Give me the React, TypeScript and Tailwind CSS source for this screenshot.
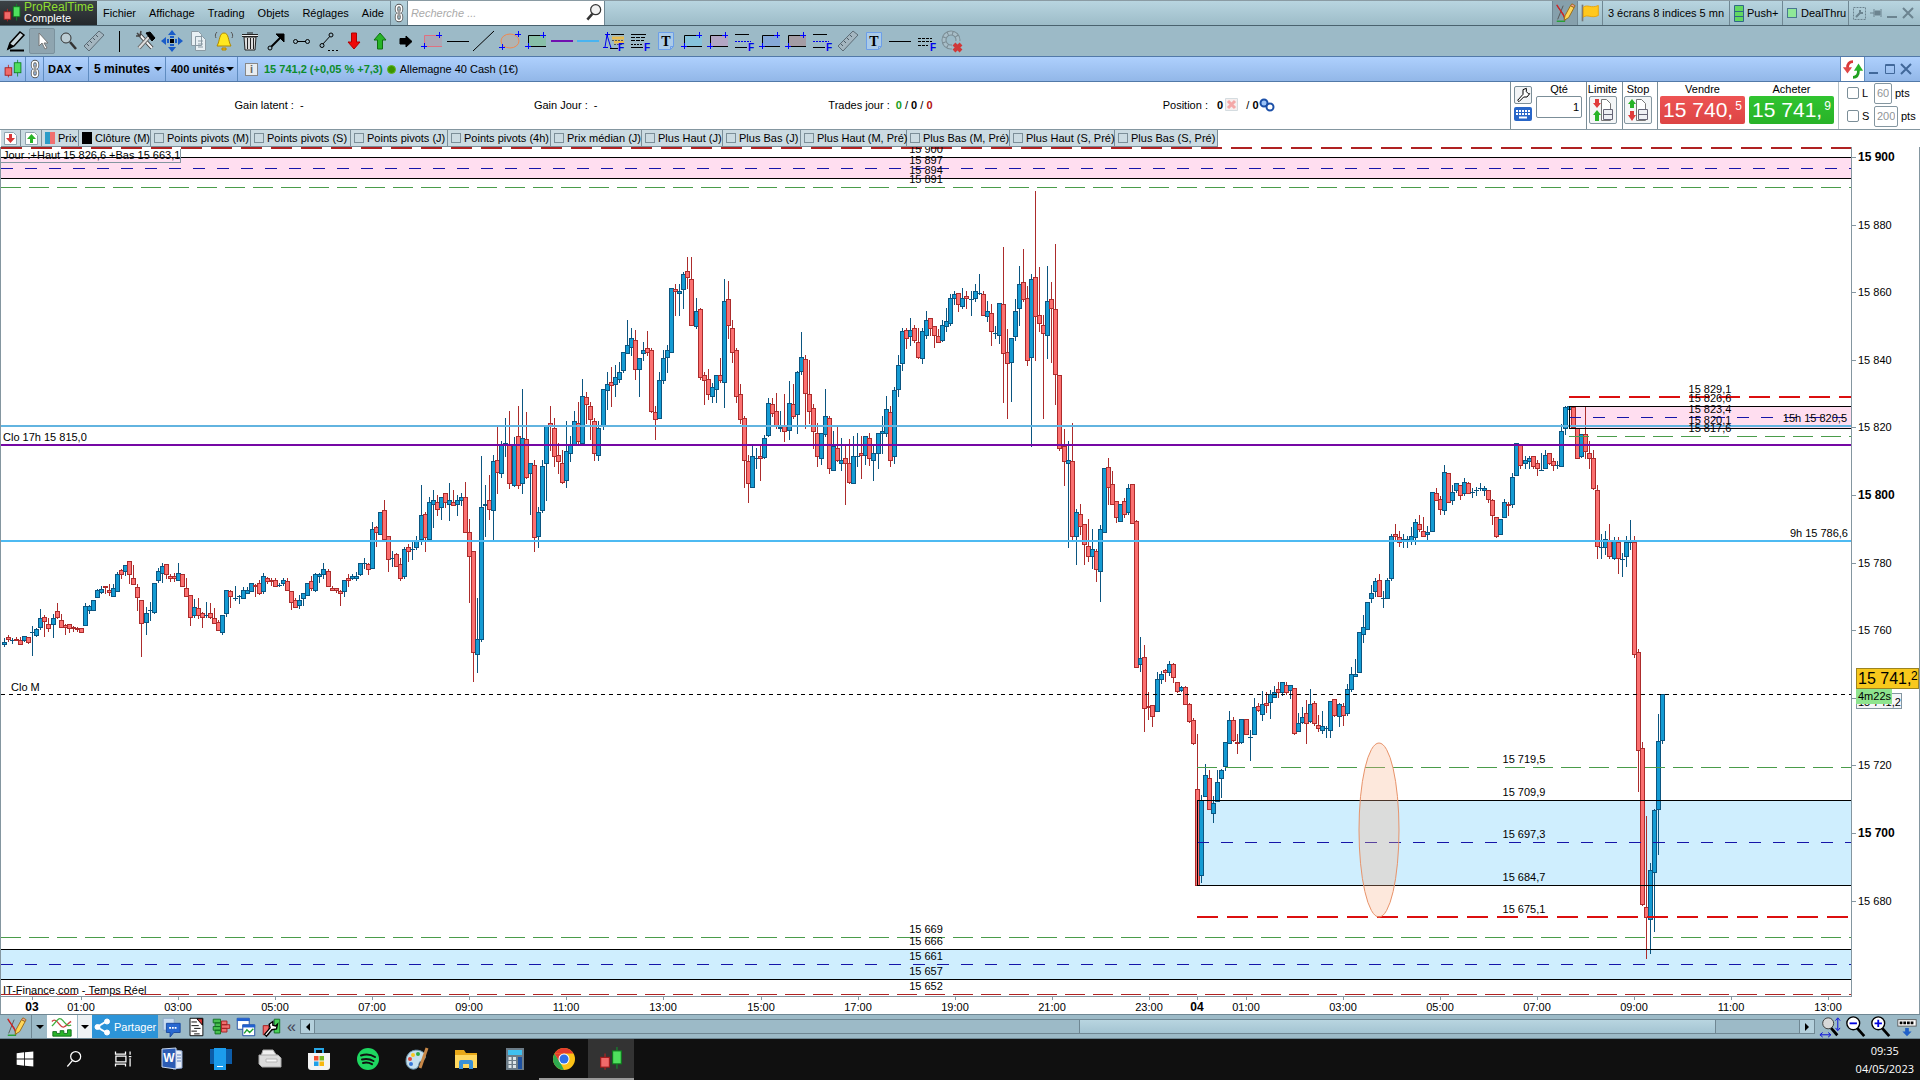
import type { ReactNode } from "react";

// One entry per 5 minute bar: direction, then high, body top, body bottom, low on the canvas
const BARS = `
u638,642,645,647 d635,637,640,642 u638,640,641,644 d637,639,641,641 d637,640,645,645 u636,636,641,642 d637,637,643,644 u626,632,633,656 u628,629,636,637 u609,618,628,630
d615,617,622,637 d618,624,629,632 u614,618,625,638 d603,611,618,619 d614,620,628,628 d624,625,628,635 d624,624,629,633 d626,627,629,632 d627,628,630,632 d628,628,633,633
u603,606,626,626 u605,606,611,614 u600,600,611,611 u589,590,598,598 u586,589,593,594 d586,586,588,594 d584,590,593,596 u584,588,597,597 u572,574,592,592 d569,570,575,579
u565,565,572,576 d561,561,575,584 d565,578,585,585 d584,587,598,611 d600,600,624,657 u607,613,623,635 u602,610,611,621 u583,583,613,614 u568,571,581,583 u563,566,574,583
d564,564,575,579 d574,576,579,582 d573,576,579,582 u563,573,581,581 d574,574,587,587 d578,588,597,597 d595,595,618,626 u599,607,616,618 d598,608,616,619 d612,613,618,628
u602,615,616,618 d603,613,618,619 d608,618,624,624 d620,622,631,631 u615,615,633,635 u590,590,614,617 d590,591,597,608 u586,598,599,601 u595,596,597,604 u587,590,599,599
u587,590,594,594 u583,583,592,592 d584,585,587,597 d580,583,594,595 u573,576,592,594 d577,578,582,584 d578,580,582,586 d578,580,587,587 u583,585,586,587 u578,580,584,586
d578,581,591,591 d591,591,603,610 d598,600,608,608 u595,600,606,609 u593,593,599,606 u583,583,596,596 d576,581,589,591 u573,574,591,592 u573,574,577,583 u563,569,575,579
d569,571,587,587 d586,588,591,591 d588,588,591,593 d590,591,594,606 u580,580,592,597 d574,578,581,587 u574,576,579,580 u572,576,579,581 u563,563,575,576 u558,563,564,569
d563,564,570,575 u522,529,569,569 d526,527,533,547 u512,512,535,535 d500,510,540,540 d536,536,560,572 u551,558,559,567 d553,554,567,567 d558,564,579,581 u547,549,577,579
d544,547,552,562 u540,549,550,560 u536,541,548,550 u485,515,540,545 d512,514,538,552 u497,502,540,541 u490,500,505,528 d495,502,510,516 u497,497,508,520 d493,493,503,508
u483,500,505,521 d490,502,506,506 u495,500,505,516 u493,497,501,506 d482,497,533,533 d519,532,557,603 d551,551,653,682 u598,639,655,673 u456,507,640,642 u485,504,506,537
d475,500,510,520 u455,461,511,540 d427,460,473,494 u441,445,474,478 u418,443,444,457 d411,444,484,489 u437,445,486,487 d406,436,486,489 u389,438,484,494 d412,439,478,479
u463,463,474,515 d460,465,538,552 u507,512,537,548 u460,466,511,513 u426,426,464,501 d406,423,427,451 d418,428,457,467 d443,455,462,474 d450,463,483,484 u421,451,481,488
u436,445,454,462 u411,421,445,445 d402,423,442,445 u379,396,444,444 d392,397,405,424 d402,406,420,440 d418,421,454,461 u421,428,456,461 u389,389,426,430 u372,384,391,410
d367,382,386,407 u365,377,385,397 u362,372,380,383 u352,352,371,373 u320,345,354,354 u328,338,348,356 d330,340,370,380 u358,358,370,397 u342,350,354,361 d331,348,353,356
d348,350,412,413 d406,412,420,440 u372,380,419,419 u350,358,381,384 u345,350,358,373 u288,288,353,353 d284,289,292,316 u284,291,294,316 u272,274,290,309 d257,271,278,289
d257,279,326,326 u298,311,327,329 d308,309,378,380 d372,375,381,405 d369,379,395,400 u383,387,397,403 u375,375,390,403 d358,375,381,383 u279,301,383,408 d281,299,326,339
d320,328,353,363 d348,350,397,403 d384,394,420,424 d416,418,461,488 d455,461,484,503 u445,456,488,488 u448,458,459,469 d445,456,459,481 u435,438,458,459 u398,403,436,437
d398,404,414,417 d393,411,426,429 u411,427,429,432 d394,426,432,442 u381,403,431,440 d384,404,417,419 u371,372,415,434 u332,357,372,375 d355,359,394,429 d360,394,412,424
d404,408,432,449 d423,433,457,467 u433,433,459,465 u389,416,435,437 d416,418,469,474 u431,446,471,471 d427,448,461,462 u438,460,464,471 d444,458,464,505 d439,463,483,484
u436,456,484,484 u433,456,457,467 d436,453,456,479 u436,436,456,465 d433,438,459,466 u444,453,461,481 u433,433,454,469 u416,431,434,454 u396,409,434,437 d406,412,461,467
u387,390,457,464 u355,365,390,397 u328,331,364,371 d328,330,339,349 u318,330,337,346 d325,328,341,343 d328,342,358,359 u328,331,359,364 u311,320,336,339 d318,318,329,336
d326,326,336,348 d329,336,343,343 u320,325,341,342 u308,321,327,332 u294,298,324,326 u291,294,299,305 d293,293,305,312 u288,298,307,309 d291,296,299,309 u291,299,300,316
u284,291,299,302 u274,293,294,295 d291,294,316,316 u301,311,317,322 d304,313,332,346 u326,333,334,339 u303,303,336,344 d247,304,354,403 d329,352,364,419 u338,338,363,402
u299,311,337,341 u266,284,309,326 d249,282,300,302 d286,298,361,366 u274,279,358,447 d191,277,317,361 d267,315,324,332 d315,325,334,419 u266,301,336,359 d282,299,309,363
d244,309,375,405 d375,375,449,451 d429,446,462,486 u441,460,464,548 d423,461,537,540 u509,512,537,565 d504,514,527,535 d524,524,545,565 d519,546,557,562 u529,549,557,569
d549,551,570,582 u525,529,572,602 u468,468,533,533 d458,467,488,505 d471,484,505,505 d501,501,518,523 u504,504,522,522 d498,501,515,518 u484,488,513,515 d484,484,524,524
d520,521,668,668 u637,658,665,672 d645,657,709,732 d692,706,708,720 d705,705,717,727 u672,679,712,712 u671,674,680,684 d669,670,673,682 u661,664,673,676 d663,664,678,683
d682,682,692,693 u686,687,691,692 d686,687,705,705 d703,704,722,723 d718,720,744,745 d734,789,886,886 u795,800,876,883 u764,775,797,797 d770,778,810,810 u796,803,814,823
u770,782,802,802 u769,770,779,798 u742,742,767,771 u711,720,744,744 d717,720,741,742 d734,742,744,754 u719,719,743,744 d719,719,735,735 u730,737,738,761 u698,707,735,735
d703,706,711,712 u691,704,715,721 d692,703,706,713 u690,694,703,719 u686,692,698,698 d682,689,693,698 u682,682,693,696 d682,685,693,695 u685,685,691,699 d688,688,734,735
u713,723,732,732 u707,717,723,724 d700,713,724,744 u689,704,722,723 d701,703,724,726 d715,725,729,732 u711,726,731,734 u726,728,729,738 u701,701,731,738 d699,699,716,717
u703,704,717,727 d703,706,716,726 u684,689,714,716 u667,674,690,692 u659,674,677,677 u632,632,673,673 u615,627,635,643 u602,602,630,630 u585,593,599,603 u578,581,592,597
d574,580,597,597 u591,598,599,608 u578,580,599,599 u534,536,579,581 d524,534,537,542 d531,537,543,547 u534,539,540,548 u536,539,540,548 u527,536,541,545 u519,522,538,545
d515,524,530,532 d517,531,537,537 u526,532,535,540 u492,492,532,532 d488,493,501,501 d496,499,510,515 u465,472,511,515 d473,473,503,503 u485,492,501,505 u483,483,491,493
d485,485,496,500 u478,482,494,496 d482,483,494,494 u488,492,493,498 u487,490,491,496 u483,488,489,491 u486,488,491,496 d490,490,500,503 d499,500,516,525 d517,517,537,538
u519,519,535,535 u499,502,518,518 d502,504,506,516 u473,477,505,508 u443,443,476,476 d445,445,466,469 u456,460,464,469 u456,458,462,469 d456,456,467,469 d460,463,469,476
u453,470,471,471 u450,455,469,469 d453,453,464,465 d458,461,466,471 u461,465,466,469 u424,431,467,467 u406,407,429,435 u406,406,410,410 d406,407,428,429 d428,428,459,459
u434,434,457,458 d407,434,452,459 d441,453,459,469 d450,458,489,490 d485,490,547,559 u534,547,548,559 u531,539,548,555 d524,541,557,559 u537,541,559,560 d537,542,559,574
u553,559,560,577 u536,542,557,567 u520,542,543,550 d536,542,655,658 d649,652,751,792 d742,748,905,906 d816,907,918,959 u863,870,920,954 u809,810,873,932 u714,741,810,855
u694,694,741,744`
  .trim()
  .split(/\s+/)
  .map((bar, i) => {
    const [high, top, bottom, low] = bar.slice(1).split(",").map(Number);
    return { x: Math.round(4 + i * 4.044), up: bar[0] === "u", high, top, bottom, low };
  });

const HOURS = ["01", "03", "05", "07", "09", "11", "13", "15", "17", "19", "21", "23", "01", "03", "05", "07", "09", "11", "13"];
const PRICES = [15900, 15880, 15860, 15840, 15820, 15800, 15780, 15760, 15740, 15720, 15700, 15680];

const LABELS: [number, number, string][] = [
  [926, 153, "15 900"],
  [926, 164, "15 897"],
  [926, 174, "15 894"],
  [926, 183, "15 891"],
  [926, 933, "15 669"],
  [926, 945, "15 666"],
  [926, 960, "15 661"],
  [926, 975, "15 657"],
  [926, 990, "15 652"],
  [1710, 393, "15 829,1"],
  [1710, 402, "15 826,6"],
  [1710, 413, "15 823,4"],
  [1710, 424, "15 820,1"],
  [1710, 432, "15 817,6"],
  [1524, 763, "15 719,5"],
  [1524, 796, "15 709,9"],
  [1524, 838, "15 697,3"],
  [1524, 881, "15 684,7"],
  [1524, 913, "15 675,1"],
];

type LineProps = { y: number; color: string; x?: number; dash?: string; w?: number };

function HLine({ y, color, x = 1, dash, w = 1 }: LineProps) {
  const mid = w === 1 ? y + 0.5 : y;
  return <path d={`M${x} ${mid}H1851`} stroke={color} strokeWidth={w} strokeDasharray={dash} />;
}

function Chart() {
  return (
    <svg
      viewBox="0 147 1920 867"
      className="block w-full h-auto bg-white"
      fontSize="11"
      fill="#000"
      role="img"
      aria-label="DAX 5 minutes"
    >
      <g shapeRendering="crispEdges" fill="none">
        <rect x="1" y="157" width="1850" height="21" fill="#ffdef0" />
        <rect x="1" y="949" width="1850" height="30" fill="#cfeefe" />
        <rect x="1197" y="800" width="654" height="86" fill="#cfeefe" />
        <rect x="1569" y="406" width="282" height="22" fill="#ffdef0" />
        {BARS.map((b) => {
          const edge = b.up ? "#0b5580" : "#ac2c2c";
          const height = Math.max(b.bottom - b.top, 1);
          return (
            <g key={b.x}>
              <rect x={b.x} y={b.high} width="1" height={Math.max(b.low - b.high, 1)} fill={edge} />
              <rect x={b.x - 2} y={b.top} width="5" height={height} fill={edge} />
              {height > 2 && (
                <rect x={b.x - 1} y={b.top + 1} width="3" height={height - 2} fill={b.up ? "#149bd3" : "#fb7070"} />
              )}
            </g>
          );
        })}

        <HLine y={148} color="#b02222" dash="21 9" w={2} />
        <HLine y={157} color="#000" />
        <HLine y={168} color="#1515a8" dash="12 12" />
        <HLine y={178} color="#000" />
        <HLine y={187} color="#4a9c4a" dash="20 8" />
        <HLine y={426} color="#62b4e0" w={2} />
        <HLine y={445} color="#7508a4" w={2} />
        <HLine y={541} color="#4dbaf2" w={2} />
        <HLine y={694} color="#000" dash="4 4" />
        <HLine y={937} color="#4a9c4a" dash="20 8" />
        <HLine y={949} color="#000" />
        <HLine y={964} color="#1515a8" dash="12 12" />
        <HLine y={979} color="#000" />
        <HLine y={994} color="#b02222" dash="20 8" />

        <HLine x={1197} y={767} color="#4a9c4a" dash="20 8" />
        <HLine x={1197} y={800} color="#000" />
        <HLine x={1197} y={842} color="#1515a8" dash="12 12" />
        <HLine x={1197} y={885} color="#000" />
        <HLine x={1197} y={917} color="#dc0f0f" dash="21 9" w={2} />
        <path d="M1197.5 800V886" stroke="#000" />

        <HLine x={1569} y={397} color="#dc0f0f" dash="21 9" w={2} />
        <HLine x={1569} y={406} color="#000" />
        <HLine x={1569} y={417} color="#1515a8" dash="12 12" />
        <HLine x={1569} y={428} color="#000" />
        <HLine x={1569} y={436} color="#4a9c4a" dash="20 8" />
        <path d="M1569.5 406V429" stroke="#000" />

        <path d="M.5 147V1014M1851.5 130V997M1 996.5H1852M1919.5 147V1014" stroke="#8496a0" />
        <path d="M180.5 149V162.5H1" stroke="#8496a0" />
      </g>
      <ellipse cx="1379" cy="830" rx="20" ry="87" fill="#f9b48c" fillOpacity=".3" stroke="#e8936a" />

      <text x="3" y="159">Jour :+Haut 15 826,6 +Bas 15 663,1</text>
      <text x="3" y="441">Clo 17h 15 815,0</text>
      <text x="11" y="691">Clo M</text>
      <text x="3" y="994">IT-Finance.com - Temps Réel</text>
      <text x="1848" y="537" textAnchor="end">9h 15 786,6</text>
      <text x="1847" y="422" textAnchor="end">15h 15 820,5</text>
      <g textAnchor="middle">
        {LABELS.map(([x, y, text]) => (
          <text key={text} x={x} y={y}>
            {text}
          </text>
        ))}
        {HOURS.map((hour, i) => {
          const x = Math.round(81 + i * 97.08);
          return (
            <g key={i}>
              <path d={`M${x + 0.5} 997v3`} stroke="#8496a0" />
              <text x={x} y="1011">{`${hour}:00`}</text>
            </g>
          );
        })}
        <g fontWeight="bold" fontSize="12">
          <path d="M32.5 997v3M1197.5 997v3" stroke="#8496a0" />
          <text x="32" y="1011">03</text>
          <text x="1197" y="1011">04</text>
        </g>
      </g>
      {PRICES.map((price) => {
        const y = Math.round(495 - (price - 15800) * 3.38);
        const major = price % 100 === 0;
        return (
          <g key={price}>
            <path d={`M1852 ${y + 0.5}h4`} stroke="#8496a0" />
            <text x="1858" y={y + 4} fontSize={major ? 12 : 11} fontWeight={major ? "bold" : "normal"}>
              {`15 ${price - 15000}`}
            </text>
          </g>
        );
      })}

      <rect x="1856.5" y="693.5" width="45" height="15" fill="#f4f5f8" stroke="#8496a0" />
      <text x="1858" y="706">15 741,2</text>
      <rect x="1856" y="688" width="36" height="16" fill="#8ee48e" />
      <text x="1858" y="700">4m22s</text>
      <rect x="1856.5" y="668.5" width="62" height="20" fill="#f8c81c" stroke="#9c8420" />
      <text x="1858" y="684" fontSize="16">
        15 741,
      </text>
      <text x="1911" y="680" fontSize="12">
        2
      </text>
    </svg>
  );
}

function Svg({ children, size = 24 }: { children: ReactNode; size?: number }) {
  return (
    <svg viewBox="0 0 24 24" width={size} height={size} fill="none" stroke="#000" className="shrink-0" aria-hidden="true">
      {children}
    </svg>
  );
}

const CANDLES = (
  <>
    <path d="M6.5 7v15" stroke="#c02020" />
    <rect x="2.5" y="10.5" width="8" height="9" fill="#f06a6a" stroke="#a01818" />
    <path d="M17.5 1v20" stroke="#10902a" />
    <rect x="13.5" y="4.500" width="8" height="12" fill="#4fe05e" stroke="#0c7a1c" />
  </>
);

const CHAIN = (
  <>
    <g stroke="#555" strokeWidth="4">
      <rect x="9" y="3" width="6" height="8" rx="3" />
      <rect x="9" y="13" width="6" height="8" rx="3" />
    </g>
    <g stroke="#fff" strokeWidth="2">
      <rect x="9" y="3" width="6" height="8" rx="3" />
      <rect x="9" y="13" width="6" height="8" rx="3" />
    </g>
    <path d="M12 8v8" stroke="#555" strokeWidth="3" />
    <path d="M12 8v8" stroke="#fff" strokeWidth="1" />
  </>
);

const DRAW = (
  <>
    <path d="M3 4l7 9 2 8M4 19l6-15" stroke="#555" />
    <path d="M3 3l9 14" stroke="#d82020" strokeWidth="1.5" />
    <path d="M3 21h9" stroke="#20a030" strokeWidth="1.5" />
    <path d="M11 20l1-5 6-11 4 2-6 11z" fill="#ffd658" stroke="#9a6a10" />
    <path d="M18 4l1.5-2 3.5 2-1 2z" fill="#f4a0a0" stroke="#9a6a10" />
  </>
);

const RULER = (
  <>
    <path d="M2 17L17 2l5 4L7 22z" fill="#a4b6c0" stroke="#5c6c76" />
    <path d="M5 15l2 2M8 12l2 2M11 9l2 2M14 6l2 2" stroke="#4c5c66" />
  </>
);

const TEXT_BOX = (
  <>
    <path d="M4.500 3.500h15v14l-3 3h-12z" fill="#abcbe8" stroke="#6c9ee8" />
    <path d="M16.500 20.500v-3h3" stroke="#6c9ee8" />
    <text x="12" y="17" textAnchor="middle" fontSize="14" fontWeight="bold" fontFamily="Liberation Serif" fill="#000" stroke="none">
      T
    </text>
  </>
);

const F_MARK = (
  <text x="16" y="22" fontSize="10" fontWeight="bold" fill="#00e" stroke="none">
    F
  </text>
);

function zone(fill: string, stroke = "#000") {
  return (
    <>
      <rect x="4" y="6" width="18" height="12" fill={fill} stroke="none" />
      <path d="M4.500 18V6.500H21" stroke={stroke} />
      <path d="M4 17.500h18" stroke={stroke} />
      <path d="M1 17.500h6M4.500 14v6M16 6.500h6M19.500 3v6" stroke="#00f" />
    </>
  );
}

const LEVELS = (
  <>
    <path d="M3 5.500h14M3 18.500h12" />
    <path d="M3 12.500h16" stroke="#00e" strokeDasharray="2 1" />
    {F_MARK}
  </>
);

const TOOLS: [string, ReactNode][] = [
  ["Dessiner", <><path d="M4 20l2-6L16 3l4 3-10 11z" fill="#c8d6dc" strokeWidth="1.500" /><path d="M4 20l2-5 3 2z" fill="#000" /><path d="M6 21.500h14" strokeWidth="2" /></>],
  ["Pointeur", <path d="M9 4v13l3-3 3 6 2-1-3-5h4z" fill="#fff" stroke="#777" />],
  ["Loupe", <><circle cx="10" cy="9" r="5" fill="#bccdd4" stroke="#333" /><path d="M14 13l6 7" stroke="#333" strokeWidth="2.500" /></>],
  ["Règle", RULER],
  ["Séparateur", <path d="M11.500 2v21" />],
  ["Outils", <><path d="M5 5l13 14" stroke="#444" strokeWidth="4" /><path d="M5 5l13 14" stroke="#f4f4f4" strokeWidth="2" /><path d="M5 19L15 8" stroke="#666" strokeWidth="4" /><path d="M5 19L15 8" stroke="#ddd" strokeWidth="2" /><path d="M12 4l4-1 5 6-3 3z" fill="#000" /><path d="M3 4l3 3M7 2l-1 5-4 0" stroke="#444" strokeWidth="1.500" /></>],
  ["Déplacer", <><g fill="#1a5cc8" stroke="none"><path d="M12 1l4 5H8zM12 23l4-5H8zM1 12l5-4v8zM23 12l-5-4v8z" /><path d="M10 7h4v2h-4zM10 15h4v2h-4zM7 10h2v4H7zM15 10h2v4h-2z" /></g><rect x="10.500" y="10.500" width="3" height="3" fill="#000" /></>],
  ["Copier", <><path d="M5.500 2.500h7l3 3v11h-10zM9.500 7.500h7l3 3v11h-10z" fill="#e8f0f4" stroke="#8a9aa4" /><path d="M12 12h5M12 15h5M12 18h5" stroke="#8a9aa4" /></>],
  ["Alerte", <><path d="M12 4c-5 0-4 8-7 13h14c-3-5-2-13-7-13z" fill="#ffe820" stroke="#b08800" /><path d="M10 19h4v2h-4z" fill="#ffb400" stroke="#b08800" /><path d="M5 3c-2 2-2 4-1 6M19 3c2 2 2 4 1 6" stroke="#555" /></>],
  ["Supprimer", <><path d="M6 8l1 13h10l1-13z" fill="#ddd" stroke="#222" /><path d="M4 6.500h16" strokeWidth="3" stroke="#222" /><path d="M4 6.500h16" stroke="#eee" /><path d="M9.500 9v11M12.500 9v11M15.500 9v11M9 4h6" stroke="#222" /></>],
  ["Flèche", <><path d="M6 19L17 8" strokeWidth="2" /><path d="M12 5h8v8z" fill="#000" /><circle cx="6" cy="19" r="2" fill="#9cbac7" /></>],
  ["Segment", <><path d="M7 12.500h9" /><circle cx="5.500" cy="12.500" r="2" /><circle cx="17.500" cy="12.500" r="2" /></>],
  ["Demi-droite", <><path d="M6 16L16 5" /><circle cx="6" cy="16.500" r="2" fill="#9cbac7" /><circle cx="15" cy="6" r="2" fill="#9cbac7" /><path d="M12 21.500h10" strokeDasharray="2 2" /></>],
  ["Flèche bas", <path d="M9.500 4h5v9H18l-6 7-6-7h3.500z" fill="#f00808" stroke="#b00000" />],
  ["Flèche haut", <path d="M9.500 20h5v-9H18l-6-7-6 7h3.500z" fill="#28b428" stroke="#107010" />],
  ["Flèche droite", <path d="M6 9.500h6V7l6 5.500-6 5.500v-3H6z" fill="#000" />],
  ["Zone rose", zone("#a9a9b8", "#e07080")],
  ["Horizontale", <path d="M1 12.500h22" />],
  ["Droite", <path d="M1 22L22 2" />],
  ["Ellipse", <><ellipse cx="12" cy="12" rx="9" ry="7" fill="#b0b4b2" stroke="#f08850" /><path d="M1 18.500h6M4.500 15v6M17 5.500h6M20.500 2v6" stroke="#00f" /></>],
  ["Zone verte", zone("#88bfa8")],
  ["Violet", <path d="M1 12h22" stroke="#7010b0" strokeWidth="2" />],
  ["Bleu", <path d="M1 12h22" stroke="#48b4f0" strokeWidth="2" />],
  ["Fibonacci extension", <><path d="M9 5.500h13M8 19.500h8" /><path d="M10 9h12M12 13h10" stroke="#e8bc50" strokeWidth="3" /><path d="M10 11.500h12M12 15.500h9" stroke="#555" strokeDasharray="2 1" /><path d="M5 6l-2 12M5 6l4 13M1 18.500h5M3 5.500h5M5.500 3v5" stroke="#00e" />{F_MARK}</>],
  ["Fibonacci", <><path d="M3 5.500h15M3 18.500h12" /><path d="M3 8.500h15M3 11.500h13" strokeDasharray="4 1" /><path d="M3 15.500h12" strokeDasharray="2 1" />{F_MARK}</>],
  ["Texte", TEXT_BOX],
  ["Zone cyan", zone("#86c3dc")],
  ["Zone mauve", zone("#b3a6c4")],
  ["Niveaux", LEVELS],
  ["Zone bleue", zone("#86a8d8")],
  ["Zone grise", zone("#a49ca4")],
  ["Niveaux 2", LEVELS],
  ["Mesure", RULER],
  ["Texte 2", TEXT_BOX],
  ["Ligne", <path d="M1 12.500h22" />],
  ["Paliers", <><path d="M4 9.500h14M4 12.500h14M4 16.500h10" strokeDasharray="3 1" />{F_MARK}</>],
  ["Effacer objets", <><circle cx="11" cy="11" r="7" stroke="#7a8c94" strokeWidth="5" /><circle cx="11" cy="11" r="7" stroke="#a8bec8" strokeWidth="3" strokeDasharray="4 1" /><path d="M12 12h12v12H12z" fill="#9cbac7" stroke="none" /><path d="M14 15l7 7M21 15l-7 7" stroke="#d03838" strokeWidth="4" /></>],
];

const INDICATORS = [
  ["Points pivots (M)", "w-[100px]"],
  ["Points pivots (S)", "w-[100px]"],
  ["Points pivots (J)", "w-[97px]"],
  ["Points pivots (4h)", "w-[103px]"],
  ["Prix médian (J)", "w-[91px]"],
  ["Plus Haut (J)", "w-[81px]"],
  ["Plus Bas (J)", "w-[78px]"],
  ["Plus Haut (M, Pré)", "w-[106px]"],
  ["Plus Bas (M, Pré)", "w-[103px]"],
  ["Plus Haut (S, Pré)", "w-[105px]"],
  ["Plus Bas (S, Pré)", "w-[103px]"],
];

function Caret() {
  return <span className="border-x-4 border-t-4 border-x-transparent border-t-black" />;
}

function WindowIcons() {
  return (
    <>
      <button type="button" aria-label="Réduire" className="w-4">
        <svg width="12" height="12" stroke="currentColor" strokeWidth="2"><path d="M1 10h9" /></svg>
      </button>
      <button type="button" aria-label="Agrandir" className="w-4">
        <svg width="12" height="12" stroke="currentColor" fill="none"><path d="M1.500 1.500h9v9h-9zM1 2.500h10" /></svg>
      </button>
      <button type="button" aria-label="Fermer" className="w-4">
        <svg width="12" height="12" stroke="currentColor" strokeWidth="2"><path d="M1 1l10 10M11 1L1 11" /></svg>
      </button>
    </>
  );
}

function MenuBar() {
  return (
    <header className="flex h-[26px] items-stretch border-t border-b border-t-[#8a9ba3] border-b-[#4a626e] bg-linear-to-b from-[#b8d5e0] to-[#9dbcc8]">
      <div className="flex w-[97px] items-center bg-linear-to-b from-[#3c4246] to-[#24282b] pl-[2px] leading-[11px]">
        <Svg size={20}>{CANDLES}</Svg>
        <div className="pl-[2px]">
          <p className="text-[12px] text-[#8fdf30]">ProRealTime</p>
          <p className="text-[11px] text-white">Complete</p>
        </div>
      </div>
      <nav className="flex items-center gap-[13px] pl-[6px] pr-[6px]">
        {["Fichier", "Affichage", "Trading", "Objets", "Réglages", "Aide"].map((item) => (
          <button key={item} type="button">
            {item}
          </button>
        ))}
      </nav>
      <button type="button" aria-label="Lier" className="flex w-[17px] items-center justify-center border-l border-[#6f8793]">
        <Svg size={20}>{CHAIN}</Svg>
      </button>
      <div className="flex w-[198px] items-center border-x border-[#6f8793] bg-white">
        <input
          aria-label="Recherche"
          placeholder="Recherche ..."
          className="min-w-0 flex-1 px-[3px] italic placeholder:text-[#aaa] outline-none"
        />
        <Svg size={20}>
          <circle cx="14" cy="8" r="6" fill="#f2f2f2" stroke="#333" strokeWidth="1.500" />
          <path d="M10 13l-6 7" stroke="#333" strokeWidth="3" />
        </Svg>
      </div>
      <div className="flex-1" />
      <button type="button" aria-label="Dessin" className="flex w-[26px] items-center justify-center border-x border-[#6f8793] bg-[#86a0ac]">
        <Svg size={22}>{DRAW}</Svg>
      </button>
      <button type="button" aria-label="Drapeau" className="flex w-[25px] items-center justify-center border-r border-[#6f8793]">
        <Svg size={20}>
          <path d="M3 2v20" stroke="#777" strokeWidth="2" />
          <path d="M4 5c5-4 9 2 18-2v12c-8 4-13-2-18 2z" fill="#ffc81e" stroke="#e8a000" />
        </Svg>
      </button>
      <button type="button" className="w-[127px] border-r border-[#6f8793]">3 écrans 8 indices 5 mn</button>
      <button type="button" className="flex w-[53px] items-center gap-[3px] border-r border-[#6f8793] pl-1">
        <svg width="10" height="17"><path d="M.5 .5h9v16h-9z" fill="#62d862" stroke="#306888" /><path d="M1 6.500h8M1 11.500h8" stroke="#306888" /></svg>
        Push+
      </button>
      <button type="button" className="flex w-[66px] items-center gap-1 border-r border-[#6f8793] pl-1">
        <span className="size-[10px] border border-[#4a7890] bg-[#8fe898]" />
        DealThru
      </button>
      <div className="flex items-center gap-[4px] pl-[4px] pr-[6px] text-[#6c8490]">
        <svg width="13" height="13" fill="none" stroke="currentColor"><rect x=".5" y=".5" width="12" height="12" strokeDasharray="2 1" /><path d="M3 10l5-5M7 3v3h3" strokeWidth="2" /></svg>
        <svg width="12" height="12" fill="currentColor" stroke="currentColor"><path d="M0 6h4M4 2v8M5 4h5v4H5zM11 2v8" /></svg>
        <svg width="12" height="12" stroke="currentColor" strokeWidth="2"><path d="M1 10h10" /></svg>
        <svg width="12" height="12" stroke="currentColor" strokeWidth="2"><path d="M1 1l10 10M11 1L1 11" /></svg>
      </div>
    </header>
  );
}

function TitleBar() {
  const segment = "flex items-center justify-between border-r border-[#5f8cc0] font-bold";
  return (
    <div className="flex h-[25px] items-stretch border-b border-[#5279a8] bg-linear-to-b from-[#aed0fd] to-[#92b7e8]">
      <div className="flex w-[26px] items-center justify-center border-r border-[#5f8cc0]">
        <Svg size={20}>{CANDLES}</Svg>
      </div>
      <div className="flex w-[18px] items-center justify-center border-r border-[#5f8cc0]">
        <Svg size={20}>{CHAIN}</Svg>
      </div>
      <button type="button" className={`${segment} w-[45px] pl-1 pr-[5px]`}>DAX <Caret /></button>
      <button type="button" className={`${segment} w-[77px] pl-[5px] pr-[3px] text-[12px]`}>5 minutes <Caret /></button>
      <button type="button" className={`${segment} w-[72px] pl-[5px] pr-[3px]`}>400 unités <Caret /></button>
      <div className="flex items-center pl-[7px]">
        <span className="flex size-[13px] items-center justify-center border border-[#888] bg-[#e8ecf0] font-bold text-[#666]">i</span>
        <span className="pl-[6px] font-bold text-[#0c8c2c]">15 741,2 (+0,05 % +7,3)</span>
        <span className="mx-[4px] size-[9px] rounded-full border border-[#60b820] bg-[#3c9400]" />
        <span>Allemagne 40 Cash (1€)</span>
      </div>
      <div className="flex-1" />
      <button type="button" aria-label="Actualiser" className="flex w-[25px] items-center justify-center border-x border-[#5f8cc0] bg-white">
        <Svg size={22}>
          <path d="M12 4c-4 0-6 3-6 7" stroke="#d83838" strokeWidth="3" />
          <path d="M1 10h10l-5 7z" fill="#e04848" stroke="none" />
          <path d="M12 21c4 0 6-3 6-8" stroke="#20a020" strokeWidth="3" />
          <path d="M13 14h10l-5-8z" fill="#28b428" stroke="none" />
        </Svg>
      </button>
      <div className="flex items-center pl-[3px] pr-[4px] text-[#41689a]">
        <WindowIcons />
      </div>
    </div>
  );
}

function OrderIcon({ flip }: { flip?: boolean }) {
  return (
    <svg width="22" height="24" fill="none">
      <path d="M9.500 1.500h5l4 4v17h-9z" fill="#fff" stroke="#777" />
      <path d="M11.500 11.500h9v10h-9zM11 16.500h10" fill="#eef0f4" stroke="#667" />
      <path d={flip ? "M5 1l4 5H7v4H3V6H1z" : "M3 1h4v4h2l-4 5-4-5h2z"} fill={flip ? "#28b428" : "#e03c3c"} />
      <path d={flip ? "M3 13h4v4h2l-4 6-4-6h2z" : "M5 12l4 5H7v6H3v-6H1z"} fill={flip ? "#e03c3c" : "#28b428"} />
    </svg>
  );
}

function TradingPanel() {
  const column = "flex flex-col items-center";
  const caption = "h-[14px] leading-[14px]";
  return (
    <section className="flex h-[48px] border-b border-[#8496a0]">
      <div className="grid flex-1 grid-cols-[235fr_300fr_295fr_335fr_348fr] items-center pb-[2px]">
        <span />
        <span>Gain latent : &nbsp;-</span>
        <span>Gain Jour : &nbsp;-</span>
        <span>
          Trades jour : &nbsp;<b className="text-[#189c18]">0</b> / <b>0</b> / <b className="text-[#b01010]">0</b>
        </span>
        <span className="flex items-center">
          Position : &nbsp;&nbsp;<b>0</b>
          <svg width="13" height="13" className="mx-[2px]"><path d="M.5 .5h12v12H.5z" fill="#f6eeee" stroke="#d4dce0" /><path d="M3 3l7 7M10 3l-7 7" stroke="#f4a8a8" strokeWidth="3" /></svg>
          &nbsp;&nbsp;/ <b className="pl-[3px]">0</b>
          <svg width="16" height="14" fill="none" stroke="#1c50a8"><circle cx="5" cy="5" r="3.500" fill="#9cc4f8" strokeWidth="2" /><circle cx="11" cy="9" r="3.500" fill="#fff" strokeWidth="2" /></svg>
        </span>
      </div>
      <div className="flex gap-[4px] border-l border-[#7b8e98] pl-[3px]">
        <div className="flex flex-col gap-[3px] pt-[4px]">
          <button type="button" aria-label="Configurer" className="flex h-[18px] w-[18px] items-center justify-center rounded-xs border border-[#7b8e98] bg-[#f2f4f6]">
            <Svg size={16}><path d="M4 20l8-9V4l5-2v5l3 3h2l-4 5h-5l-7 7z" fill="#fff" strokeWidth="1.500" /></Svg>
          </button>
          <button type="button" aria-label="Clavier" className="flex h-[14px] w-[18px] items-center justify-center rounded-xs bg-[#2866c8]">
            <svg width="14" height="10" stroke="#fff" strokeWidth="2"><path d="M0 2h14M0 5h14" strokeDasharray="2 1" /><path d="M3 8.500h8" /></svg>
          </button>
        </div>
        <div className={`${column} w-[46px]`}>
          <label htmlFor="qty" className={caption}>Qté</label>
          <input id="qty" defaultValue="1" className="h-[22px] w-full rounded-xs border border-[#7b8e98] px-[2px] text-right text-[11px]" />
        </div>
        <div className={`${column} w-[32px] border-l border-[#7b8e98]`}>
          <span className={caption}>Limite</span>
          <button type="button" aria-label="Limite" className="flex h-[28px] w-[28px] items-center justify-center rounded-xs border border-[#8496a0] bg-[#f4f6f7]"><OrderIcon /></button>
        </div>
        <div className={`${column} w-[31px] border-l border-[#7b8e98]`}>
          <span className={caption}>Stop</span>
          <button type="button" aria-label="Stop" className="flex h-[28px] w-[28px] items-center justify-center rounded-xs border border-[#8496a0] bg-[#f4f6f7]"><OrderIcon flip /></button>
        </div>
        <div className={`${column} border-l border-[#7b8e98] pl-[2px]`}>
          <span className={caption}>Vendre</span>
          <button type="button" className="flex h-[28px] w-[85px] justify-center rounded-xs bg-linear-to-b from-[#ee5454] to-[#dc4444] text-[21px] leading-[28px] text-white">
            15 740,<span className="pl-[2px] text-[12px] leading-[20px]">5</span>
          </button>
        </div>
        <div className={column}>
          <span className={caption}>Acheter</span>
          <button type="button" className="flex h-[28px] w-[85px] justify-center rounded-xs bg-linear-to-b from-[#30c430] to-[#28b228] text-[21px] leading-[28px] text-white">
            15 741,<span className="pl-[2px] text-[12px] leading-[20px]">9</span>
          </button>
        </div>
        <div className="flex w-[82px] flex-col gap-[1px] border-l border-[#b4c0c6] pl-[8px]">
          <div className="flex h-[22px] items-center gap-[3px]">
            <input type="checkbox" id="limit" className="size-[12px] appearance-none rounded-xs border border-[#7b8e98] bg-white" />
            <label htmlFor="limit" className="w-[9px]">L</label>
            <input aria-label="Points limite" defaultValue="60" className="h-[21px] w-[18px] rounded-xs border border-[#8496a0] px-[2px] text-[#909498]" />
            <span>pts</span>
          </div>
          <div className="flex h-[22px] items-center gap-[3px]">
            <input type="checkbox" id="stop" className="size-[12px] appearance-none rounded-xs border border-[#7b8e98] bg-white" />
            <label htmlFor="stop" className="w-[9px]">S</label>
            <input aria-label="Points stop" defaultValue="200" className="h-[21px] w-[24px] rounded-xs border border-[#8496a0] px-[2px] text-[#909498]" />
            <span>pts</span>
          </div>
        </div>
      </div>
    </section>
  );
}

function Indicators() {
  const cell = "flex items-center gap-[3px] border-r border-[#7b8e98] pl-[3px] whitespace-nowrap";
  return (
    <div className="flex h-[17px] pl-px">
      <div className="flex border-b border-[#7b8e98] bg-[#cbdbe2]">
        <button type="button" aria-label="Masquer" className="flex w-[20px] items-center justify-center border-r border-[#7b8e98]">
          <svg width="13" height="13"><path d="M.5 .5h9l3 3v9H.5z" fill="#fff" stroke="#90a4b0" /><path d="M5 2h3v4h3l-4.500 5L2 6h3z" fill="#d83838" /></svg>
        </button>
        <button type="button" aria-label="Afficher" className="flex w-[21px] items-center justify-center border-r border-[#7b8e98]">
          <svg width="13" height="13"><path d="M.5 .5h9l3 3v9H.5z" fill="#fff" stroke="#90a4b0" /><path d="M5 11h3V7h3L6.500 2 2 7h3z" fill="#28b428" /></svg>
        </button>
        <button type="button" className={`${cell} w-[37px]`}>
          <span className="h-[12px] w-[10px] shrink-0 border-l-5 border-[#2a9cc8] bg-[#f07070]" />
          Prix
        </button>
        <button type="button" className={`${cell} w-[72px]`}>
          <span className="h-[12px] w-[10px] shrink-0 bg-black" />
          Clôture (M)
        </button>
        {INDICATORS.map(([name, width]) => (
          <label key={name} className={`${cell} ${width}`}>
            <input type="checkbox" className="size-[10px] shrink-0 appearance-none border border-[#7b8e98]" />
            {name}
          </label>
        ))}
      </div>
    </div>
  );
}

const SHORTCUTS: [string, ReactNode][] = [
  ["Messages", <><path d="M3.500 2.500h12v13h-12z" fill="#c8dcf0" stroke="#8aa8c8" /><path d="M7 8h15v10h-7l-4 5v-5H7z" fill="#2868d0" stroke="#1848a0" /><path d="M10 13h9" stroke="#fff" strokeWidth="2" strokeDasharray="2 1" /></>],
  ["Rapport", <><path d="M5.500 2.500h14v19h-14z" fill="#fff" /><path d="M7 6.500h6M7 10.500h8M10 13.500h7M7 16.500h6M10 19.500h6" /><path d="M13 3h6v7z" fill="#d83838" /></>],
  ["Carnet", <><path d="M3.500 3.500h8v4h-8zM5.500 7.500h6v4h-6zM3.500 11.500h8v4h-8zM5.500 15.500h6v4h-6z" fill="#48c050" stroke="#107020" /><path d="M12.500 5.500h6v4h-6zM12.500 9.500h9v4h-9zM12.500 13.500h6v4h-6z" fill="#f07070" stroke="#a02020" /></>],
  ["Graphiques", <><path d="M2.500 2.500h13v12h-13z" fill="#fff" stroke="#1848a0" /><path d="M2 4h14" stroke="#2060d0" strokeWidth="3" /><path d="M8.500 9.500h13v12h-13z" fill="#fff" stroke="#1848a0" /><path d="M8 11h14" stroke="#2060d0" strokeWidth="3" /><path d="M10 19l3-4 3 3 4-4" stroke="#20a030" strokeWidth="1.500" /></>],
  ["Backtest", <><path d="M15.500 3.500h6v15h-6z" fill="#48d058" stroke="#107020" /><path d="M3.500 10.500h6v10h-6z" fill="#f06a6a" stroke="#a01818" /><path d="M5 20l6-7-1-4 4-3v4l3 1 2-2-1 5-5 1-6 7z" fill="#fff" strokeWidth="1.500" /></>],
];

function BottomBar() {
  return (
    <div className="flex h-[25px] items-stretch border-t border-b border-[#6f8793] bg-[#9cbac7]">
      <button type="button" aria-label="Objets" className="flex w-[32px] items-center justify-center border-r border-[#6f8793]"><Svg size={22}>{DRAW}</Svg></button>
      <button type="button" aria-label="Plus d'objets" className="flex w-[15px] items-center justify-center"><Caret /></button>
      <button type="button" aria-label="Indicateurs" className="flex w-[30px] items-center justify-center bg-white">
        <Svg size={22}>
          <path d="M1 6c5-6 9 8 13 6s5-5 8-6" stroke="#d04040" strokeWidth="1.500" />
          <path d="M1 11c5-4 7-12 12-6s6 6 9 5" stroke="#40b040" strokeWidth="1.500" />
          <path d="M2 22v-5h4v2h4v-3h4v3h4v-4h4v7z" fill="#28b428" stroke="#107020" />
        </Svg>
      </button>
      <button type="button" aria-label="Plus d'indicateurs" className="flex w-[15px] items-center justify-center border-l border-[#9cbac7] bg-[#eef2f4]"><Caret /></button>
      <button type="button" className="flex w-[66px] items-center gap-[4px] bg-[#2c94d8] pl-[2px] text-white">
        <svg width="16" height="18" fill="#fff" stroke="#fff"><path d="M13 3L3 9l10 6" fill="none" strokeWidth="2" /><circle cx="13" cy="3.500" r="2.500" /><circle cx="3.500" cy="9" r="2.500" /><circle cx="13" cy="14.500" r="2.500" /></svg>
        Partager
      </button>
      {SHORTCUTS.map(([name, icon]) => (
        <button key={name} type="button" aria-label={name} className="flex w-[25px] items-center justify-center"><Svg size={22}>{icon}</Svg></button>
      ))}
      <button type="button" className="w-[17px] text-[16px] leading-[20px] text-[#445]">«</button>
      <div className="my-[4px] flex flex-1 border border-[#6f8793]">
        <button type="button" aria-label="Défiler à gauche" className="flex w-[14px] items-center justify-center border-r border-[#6f8793] bg-[#b4d0dc]">
          <span className="border-y-4 border-r-4 border-y-transparent border-r-black" />
        </button>
        <div className="grid flex-1 grid-cols-[763fr_637fr_83fr]">
          <div className="col-start-2 border-x border-[#6f8793] bg-linear-to-b from-[#b8d5e0] to-[#a4c4d2]" />
        </div>
        <button type="button" aria-label="Défiler à droite" className="flex w-[15px] items-center justify-center border-l border-[#6f8793] bg-[#b4d0dc]">
          <span className="border-y-4 border-l-4 border-y-transparent border-l-black" />
        </button>
      </div>
      <div className="flex w-[105px] items-center justify-between pl-[4px] pr-[2px]">
        <Svg size={22}><path d="M13 13l7 8" strokeWidth="3" /><circle cx="10" cy="8" r="6" fill="#d8d8d8" stroke="#333" /><path d="M20.500 3v12M18 5l2.500-3L23 5M18 13l2.500 3L23 13M2 20.500h10M4 18l-3 2.500L4 23M10 18l3 2.500L10 23" stroke="#00d" /></Svg>
        <Svg size={22}><path d="M13 13l8 9" strokeWidth="3" /><circle cx="9" cy="8" r="7" fill="#fff" strokeWidth="1.500" /><path d="M5 8h8" stroke="#00d" strokeWidth="2" /></Svg>
        <Svg size={22}><path d="M13 13l8 9" strokeWidth="3" /><circle cx="9" cy="8" r="7" fill="#fff" strokeWidth="1.500" /><path d="M5 8h8M9 4v8" stroke="#00d" strokeWidth="2" /></Svg>
        <Svg size={22}><rect x="2" y="4" width="20" height="7" fill="#fff" stroke="#555" /><path d="M4 7.500h16" strokeWidth="3" strokeDasharray="3 1" /><path d="M10 13h4v4h3l-5 5-5-5h3z" fill="#2060c8" stroke="none" /></Svg>
      </div>
    </div>
  );
}

const APPS: [string, ReactNode][] = [
  ["Démarrer", <path d="M2 5l9-1v7.500H2zM12 4l10-1v8.500H12zM2 12.500h9V20l-9-1zM12 12.500h10V21l-10-1z" fill="#fff" stroke="none" />],
  ["Rechercher", <><circle cx="14" cy="9" r="6" stroke="#fff" strokeWidth="1.500" /><path d="M10 14l-6 7" stroke="#fff" strokeWidth="1.500" /></>],
  ["Vue des tâches", <path d="M3 3v3h12V3M3 21v-3h12v3M3.500 8.500h12v7h-12zM20.500 3v4M20.500 11v10M19 9h3" stroke="#fff" strokeWidth="1.500" />],
  ["Word", <><path d="M8 2l14 2v17l-9 1z" fill="#e8eef8" stroke="#8aa4d0" /><path d="M2 2l14-1v21L2 20z" fill="#2c5cb4" stroke="#c8d8f0" /><text x="9" y="15" textAnchor="middle" fontSize="12" fontWeight="bold" fill="#fff" stroke="none">W</text><path d="M17 8h4M17 11h4M17 14h4" stroke="#5c80c0" /></>],
  ["Votre téléphone", <><path d="M1 2h22v15H1z" fill="#0c5ca8" stroke="none" /><path d="M5 1h12v22H5z" fill="#1c9cec" stroke="none" /><path d="M8 19.500h6" stroke="#fff" /></>],
  ["Imprimante", <><path d="M5 3h10l4 6H3z" fill="#f0f0f0" stroke="#aaa" /><path d="M1 8h19l3 3v9H4l-3-3z" fill="#dcdcdc" stroke="#aaa" /><path d="M8 12h11v3H8z" fill="#f8f8f8" stroke="#b8b8b8" /></>],
  ["Store", <><path d="M8 6V2h8v4" stroke="#28a8e8" strokeWidth="2" /><path d="M1 6h22v14q0 3-3 3H4q-3 0-3-3z" fill="#f4f4f4" stroke="none" /><path d="M7 9h4.500v4.500H7z" fill="#f05030" stroke="none" /><path d="M12.500 9H17v4.500h-4.500z" fill="#78b820" stroke="none" /><path d="M7 14.500h4.500V19H7z" fill="#20a0e8" stroke="none" /><path d="M12.500 14.500H17V19h-4.500z" fill="#f8b810" stroke="none" /></>],
  ["Spotify", <><circle cx="12" cy="12" r="11" fill="#1ed760" stroke="none" /><path d="M5 8.500c5-1.500 10-1 14 1.500M6 12.500c4-1 8-.5 11.500 1.500M7 16c3-.8 6-.5 9 1.200" stroke="#111" strokeWidth="2" strokeLinecap="round" /></>],
  ["Paint", <><path d="M1 14C1 6 8 1 16 4c7 3 5 9 0 10-3 1-1 4-4 7-4 3-11 0-11-7z" fill="#c4e0ee" stroke="#6890a8" /><circle cx="5" cy="12" r="2" fill="#e04838" stroke="none" /><circle cx="8" cy="8" r="2" fill="#f8c820" stroke="none" /><circle cx="13" cy="7" r="2" fill="#30a848" stroke="none" /><circle cx="6" cy="17" r="2" fill="#3878d8" stroke="none" /><path d="M22 1l-7 20" stroke="#c88848" strokeWidth="3" /></>],
  ["Explorateur", <><path d="M1 3h9l2 3h11v15H1z" fill="#e8a818" stroke="none" /><path d="M1 8h22v13H1z" fill="#ffd860" stroke="none" /><path d="M5 22v-7q0-2 2-2h10q2 0 2 2v7h-4v-5H9v5z" fill="#3890d8" stroke="none" /></>],
  ["Calculatrice", <><path d="M3 1h18v22H3z" fill="#6c7c88" stroke="none" /><path d="M5 3h14v5H5z" fill="#40c0f0" stroke="none" /><path d="M7 10v12M11.500 10v12" stroke="#dce4e8" strokeWidth="3" strokeDasharray="3 1" /><path d="M17 10v12" stroke="#1c50a0" strokeWidth="4" /></>],
  ["Chrome", <><circle cx="12" cy="12" r="11" fill="#fbc116" stroke="none" /><path d="M2.500 6.500A11 11 0 0 1 21.500 6.500H12z" fill="#e33b2e" stroke="none" /><path d="M2.500 6.500l6 9.500 3.500 7A11 11 0 0 1 2.500 6.500z" fill="#2da94f" stroke="none" /><path d="M2.500 6.500L7 14l5-7.500z" fill="#e33b2e" stroke="none" /><circle cx="12" cy="12" r="5.500" fill="#fff" stroke="none" /><circle cx="12" cy="12" r="4.500" fill="#2f6fe8" stroke="none" /></>],
];

function Taskbar() {
  return (
    <footer className="flex h-[41px] items-stretch justify-between bg-[#101010] text-white">
      <div className="flex">
        {APPS.map(([name, icon]) => (
          <button
            key={name}
            type="button"
            aria-label={name}
            className={`flex w-[49px] items-center justify-center border-b-2 ${name === "Chrome" ? "border-[#9a9a9a]" : "border-transparent"}`}
          >
            <Svg size={name === "Démarrer" || name === "Rechercher" || name === "Vue des tâches" ? 20 : 24}>{icon}</Svg>
          </button>
        ))}
        <button type="button" aria-label="ProRealTime" className="flex w-[46px] items-center justify-center border-b-2 border-[#9a9a9a] bg-[#333]">
          <Svg size={26}>{CANDLES}</Svg>
        </button>
      </div>
      <div className="flex flex-col justify-center pr-[6px] text-center font-['Open_Sans',sans-serif] text-[11px] leading-[18px]">
        <span>09:35</span>
        <span>04/05/2023</span>
      </div>
    </footer>
  );
}

export default function App() {
  return (
    <div className="flex flex-col bg-white font-['Liberation_Sans',Arial,sans-serif] text-[11px] leading-[14px] text-black">
      <MenuBar />
      <div className="flex h-[31px] items-center border-b border-[#5279a8] bg-[#9cbac7] pl-[3px]">
        {TOOLS.map(([name, icon]) => (
          <button
            key={name}
            type="button"
            aria-label={name}
            className={`flex h-[26px] w-[26px] items-center justify-center ${name === "Pointeur" ? "rounded-xs border border-[#7b929e] bg-[#8fa5b0]" : ""}`}
          >
            <Svg>{icon}</Svg>
          </button>
        ))}
      </div>
      <TitleBar />
      <TradingPanel />
      <Indicators />
      <Chart />
      <BottomBar />
      <Taskbar />
    </div>
  );
}
